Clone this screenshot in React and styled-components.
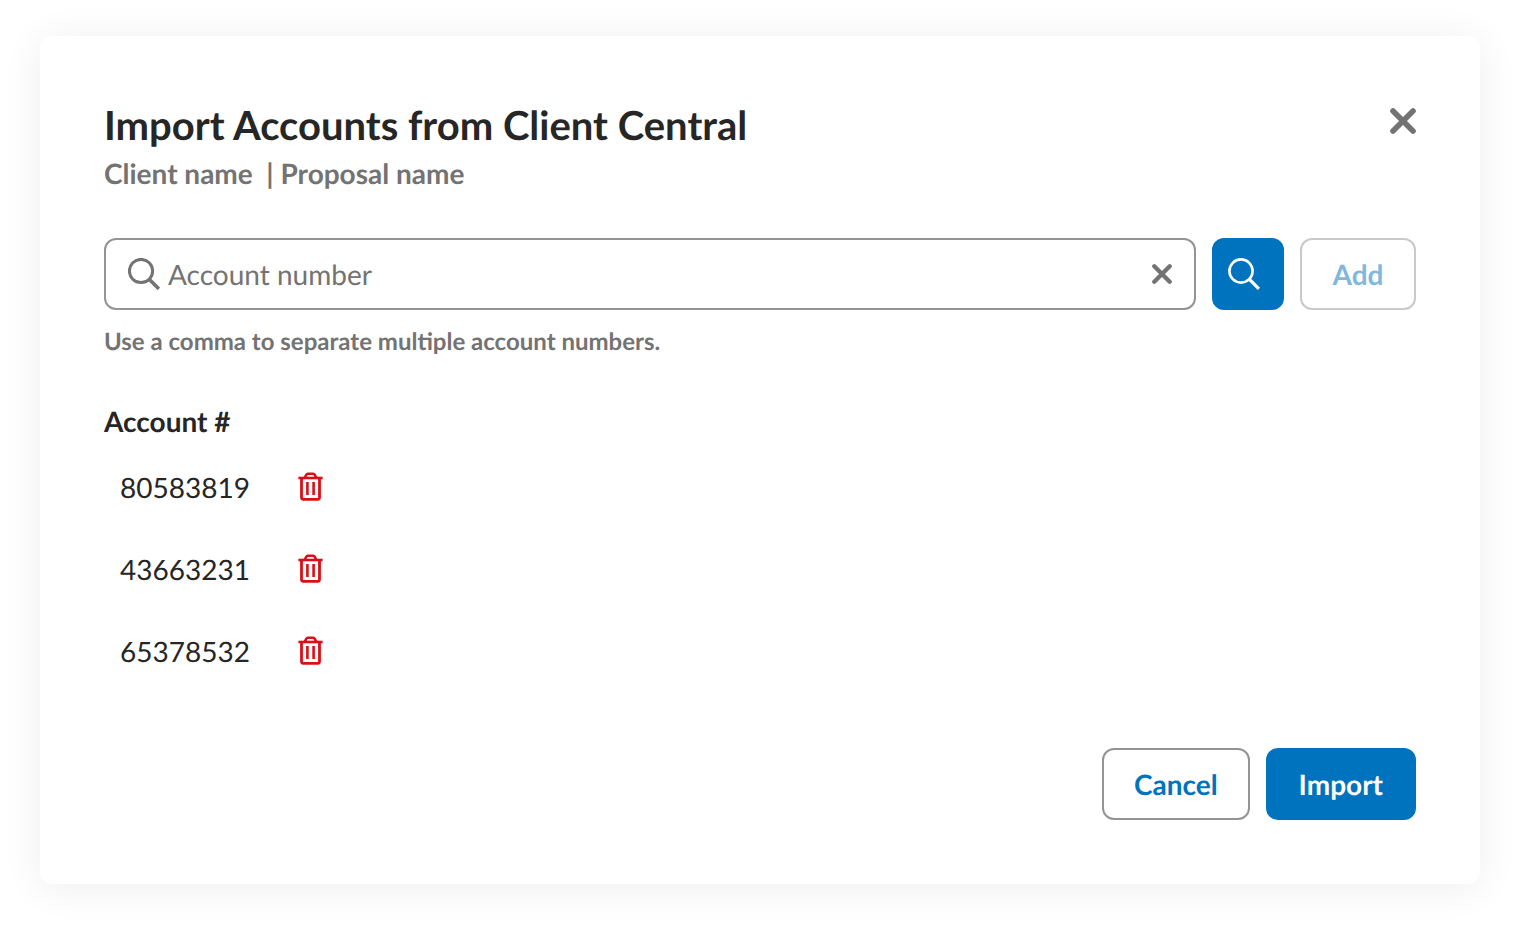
import React, { useState } from "react";
import styled, { createGlobalStyle, css } from "styled-components";

const GlobalStyle = createGlobalStyle`
  *, *::before, *::after { box-sizing: border-box; }
  body {
    margin: 0;
    background: #fff;
    color: #262626;
    font-family: Lato, "Liberation Sans", sans-serif;
    text-rendering: geometricPrecision;
  }
  button, input { font-family: inherit; text-rendering: inherit; }
`;

const Page = styled.main`
  min-height: 100vh;
  padding: 36px 40px 44px;
`;

const Dialog = styled.section`
  padding: 64px;
  border-radius: 12px;
  background: #fff;
  box-shadow: 0 4px 40px rgba(0, 0, 0, 0.07);
`;

const Header = styled.header`
  display: flex;
  justify-content: space-between;
  align-items: flex-start;
  margin-bottom: 42px;
`;

const Title = styled.h1`
  margin: 0;
  font-size: 40px;
  font-weight: 700;
  line-height: 50px;
`;

const Subtitle = styled.p`
  margin: 0;
  color: #737373;
  font-size: 28px;
  font-weight: 700;
  line-height: 46px;
  white-space: pre;
`;

const IconButton = styled.button`
  display: flex;
  flex: none;
  padding: ${({ $pad }) => $pad || "0"};
  border: 0;
  background: none;
  color: ${({ $danger }) => ($danger ? "#da0f18" : "#737373")};
  cursor: pointer;
`;

const SearchRow = styled.form`
  display: flex;
  gap: 16px;
`;

const Field = styled.div`
  display: flex;
  flex: 1;
  align-items: center;
  min-width: 0;
  height: 72px;
  padding: 0 22px;
  border: 2px solid #949494;
  border-radius: 12px;
  background: #fff;
  color: #737373;
`;

const FieldLabel = styled.label`
  display: flex;
  margin-right: 8px;
`;

const Input = styled.input`
  flex: 1;
  min-width: 0;
  padding: 0;
  border: 0;
  outline: 0;
  background: none;
  color: #262626;
  font-size: 28px;
  line-height: 40px;
  &::placeholder { color: #737373; opacity: 1; }
`;

const solid = css`
  padding: 0 31px;
  border-color: #0073bf;
  background: #0073bf;
  color: #fff;
`;

const square = css`
  justify-content: flex-start;
  width: 72px;
  min-width: 0;
  padding: 0 14px;
`;

const Button = styled.button`
  display: flex;
  align-items: center;
  justify-content: center;
  min-width: 116px;
  height: 72px;
  padding: 0 30px;
  border: 2px solid #949494;
  border-radius: 12px;
  background: #fff;
  color: #0073bf;
  font-size: 28px;
  font-weight: 700;
  line-height: 40px;
  cursor: pointer;
  ${({ $solid }) => $solid && solid}
  ${({ $icon }) => $icon && square}
  &:disabled { opacity: 0.5; cursor: default; }
`;

const Hint = styled.p`
  margin: 16px 0 38px;
  color: #737373;
  font-size: 24px;
  font-weight: 700;
  line-height: 32px;
`;

const Table = styled.table`
  border-collapse: collapse;
  font-size: 28px;
  line-height: 40px;
`;

const HeadCell = styled.th`
  height: 50px;
  padding: 0;
  font-weight: 700;
  text-align: left;
`;

const Cell = styled.td`
  height: 82px;
  padding: 0 32px 0 16px;
`;

const Footer = styled.footer`
  display: flex;
  justify-content: flex-end;
  gap: 16px;
  margin-top: 56px;
`;

const CloseIcon = ({ size }) => (
  <svg width={size} height={size} viewBox="0 0 26 26" fill="none" stroke="currentColor" strokeWidth="5.6" strokeLinecap="round" aria-hidden="true">
    <path d="M3 3 23 23M23 3 3 23" />
  </svg>
);

const SearchIcon = ({ thickness = 3 }) => (
  <svg width="32" height="32" viewBox="0 0 32 32" fill="none" stroke="currentColor" aria-hidden="true">
    <circle cx="13" cy="13" r="11.6" strokeWidth={thickness} />
    <path d="m21.2 21.2 9.7 9.7" strokeWidth={thickness + 0.6} />
  </svg>
);

const TrashIcon = () => (
  <svg width="26" height="30" viewBox="0 0 26 30" fill="none" stroke="currentColor" aria-hidden="true">
    <path d="M0.4 6H24.6" strokeWidth="2.6" strokeLinecap="butt" />
    <path d="M6.6 6 8.2 2.8Q8.8 1.8 9.8 1.8H15.2Q16.2 1.8 16.8 2.8L18.4 6" strokeWidth="2.6" />
    <path d="M3.5 6V25.6Q3.5 27.3 5.2 27.3H19.8Q21.5 27.3 21.5 25.6V6" strokeWidth="2.8" />
    <path d="M9.4 10V23M15.6 10V23" strokeWidth="2.6" />
  </svg>
);

export default function App() {
  const [query, setQuery] = useState("");
  const [accounts, setAccounts] = useState(["80583819", "43663231", "65378532"]);

  return (
    <>
      <GlobalStyle />
      <Page>
        <Dialog role="dialog" aria-labelledby="dialog-title">
          <Header>
            <div>
              <Title id="dialog-title">Import Accounts from Client Central</Title>
              <Subtitle>{"Client name  | Proposal name"}</Subtitle>
            </div>
            <IconButton type="button" aria-label="Close" $pad="8px 0">
              <CloseIcon size={26} />
            </IconButton>
          </Header>

          <SearchRow onSubmit={(e) => e.preventDefault()}>
            <Field>
              <FieldLabel htmlFor="account-number" aria-label="Account number">
                <SearchIcon />
              </FieldLabel>
              <Input
                id="account-number"
                placeholder="Account number"
                value={query}
                onChange={(e) => setQuery(e.target.value)}
              />
              <IconButton type="button" aria-label="Clear" onClick={() => setQuery("")}>
                <CloseIcon size={20} />
              </IconButton>
            </Field>
            <Button type="submit" aria-label="Search" $solid $icon>
              <SearchIcon thickness={2.6} />
            </Button>
            <Button type="button" disabled>Add</Button>
          </SearchRow>
          <Hint>Use a comma to separate multiple account numbers.</Hint>

          <Table>
            <thead>
              <tr>
                <HeadCell scope="col" colSpan={2}>Account #</HeadCell>
              </tr>
            </thead>
            <tbody>
              {accounts.map((account) => (
                <tr key={account}>
                  <Cell>{account}</Cell>
                  <Cell>
                    <IconButton
                      type="button"
                      $danger
                      aria-label={`Remove ${account}`}
                      onClick={() => setAccounts(accounts.filter((a) => a !== account))}
                    >
                      <TrashIcon />
                    </IconButton>
                  </Cell>
                </tr>
              ))}
            </tbody>
          </Table>

          <Footer>
            <Button type="button">Cancel</Button>
            <Button type="button" $solid>Import</Button>
          </Footer>
        </Dialog>
      </Page>
    </>
  );
}
